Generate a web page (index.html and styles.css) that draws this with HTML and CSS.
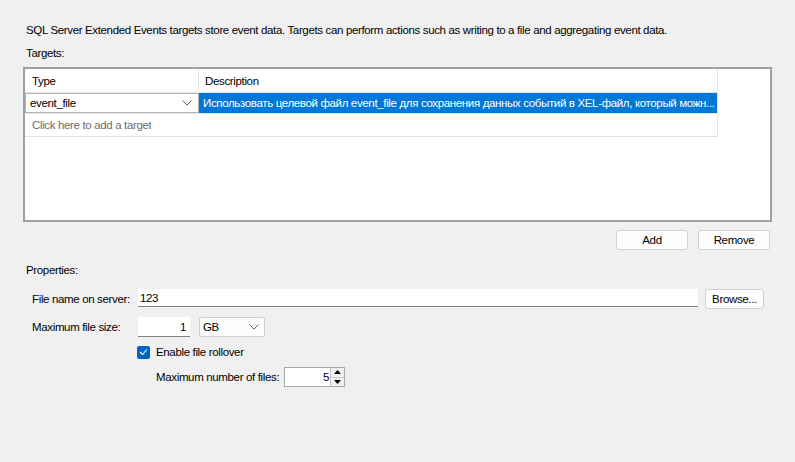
FILE: index.html
```html
<!DOCTYPE html>
<html>
<head>
<meta charset="utf-8">
<link rel="stylesheet" href="styles.css">
</head>
<body>
<div class="page">
  <div class="intro">SQL Server Extended Events targets store event data. Targets can perform actions such as writing to a file and aggregating event data.</div>
  <div class="section-label targets-label">Targets:</div>
  <div class="grid-box">
    <div class="grid">
      <div class="row head">
        <div class="cell c1">Type</div>
        <div class="cell c2">Description</div>
      </div>
      <div class="row data">
        <div class="cell c1 combo-cell">
          <span>event_file</span>
          <svg class="chev" width="10" height="6" viewBox="0 0 10 6"><path d="M0.5 0.5 L5 5 L9.5 0.5" fill="none" stroke="#606060" stroke-width="1"/></svg>
        </div>
        <div class="cell c2 selected">Использовать целевой файл event_file для сохранения данных событий в XEL-файл, который можн...</div>
      </div>
      <div class="row add">
        <div class="cell addcell">Click here to add a target</div>
      </div>
    </div>
  </div>
  <div class="actions">
    <button class="btn btn-add">Add</button>
    <button class="btn btn-remove">Remove</button>
  </div>
  <div class="section-label props-label">Properties:</div>
  <div class="props">
    <div class="prow r-file">
      <div class="plabel">File name on server:</div>
      <div class="textbox wide">123</div>
      <button class="btn btn-browse">Browse...</button>
    </div>
    <div class="prow r-size">
      <div class="plabel">Maximum file size:</div>
      <div class="textbox num">1</div>
      <div class="combo">
        <span>GB</span>
        <svg class="chev" width="10" height="6" viewBox="0 0 10 6"><path d="M0.5 0.5 L5 5 L9.5 0.5" fill="none" stroke="#606060" stroke-width="1"/></svg>
      </div>
    </div>
    <div class="prow r-check">
      <span class="checkbox"><svg width="9" height="8" viewBox="0 0 9 8"><path d="M1 4 L3.5 6.5 L8 1.5" fill="none" stroke="#ffffff" stroke-width="1.1"/></svg></span>
      <span class="checklabel">Enable file rollover</span>
    </div>
    <div class="prow r-files">
      <div class="plabel2">Maximum number of files:</div>
      <div class="spinner">
        <span class="spin-val">5</span>
        <span class="spin-btns">
          <span class="spin-up"><svg width="7" height="4" viewBox="0 0 7 4"><path d="M0 4 L3.5 0 L7 4 Z" fill="#000"/></svg></span>
          <span class="spin-down"><svg width="7" height="4" viewBox="0 0 7 4"><path d="M0 0 L3.5 4 L7 0 Z" fill="#000"/></svg></span>
        </span>
      </div>
    </div>
  </div>
</div>
</body>
</html>
```

FILE: styles.css
```css
* { box-sizing: border-box; }
html, body {
  margin: 0;
  padding: 0;
  background: #f0f0f0;
}
body {
  font-family: "Liberation Sans", Arial, sans-serif;
  font-size: 11.5px;
  letter-spacing: -0.35px;
  color: #000;
  width: 795px;
  height: 462px;
  overflow: hidden;
}
.page {
  padding-top: 22px;
}
.intro {
  padding-left: 26px;
  height: 16px;
  line-height: 16px;
  white-space: nowrap;
}
.section-label {
  padding-left: 26px;
  height: 16px;
  line-height: 16px;
}
.targets-label {
  margin-top: 7px;
}
.grid-box {
  margin-top: 6px;
  margin-left: 23px;
  width: 749px;
  height: 155px;
  background: #fff;
  border: 1px solid #a0a0a0;
  box-shadow: inset 1px 1px 0 #a0a0a0, inset -1px -1px 0 #a0a0a0;
  padding: 1px;
}
.grid {
  width: 693px;
  border-right: 1px solid #e3e3e3;
}
.row {
  display: flex;
  border-bottom: 1px solid #e3e3e3;
}
.row.head { height: 24px; }
.row.data { height: 21px; }
.row.add { height: 23px; }
.cell {
  white-space: nowrap;
  overflow: hidden;
  display: flex;
  align-items: center;
}
.c1 {
  width: 174px;
  flex: none;
  border-right: 1px solid #e3e3e3;
  padding-left: 7px;
}
.c2 {
  flex: 1;
  padding-left: 6px;
}
.combo-cell {
  border: 1px solid #b4b4b4;
  padding-left: 4px;
  padding-right: 6px;
  justify-content: space-between;
}
.selected {
  background: #0078d7;
  color: #fff;
  padding-left: 4px;
}
.addcell {
  padding-left: 7px;
  color: #6d6d6d;
}
.actions {
  display: flex;
  justify-content: flex-end;
  gap: 10px;
  width: 770px;
  margin-top: 8px;
}
.btn {
  font-family: inherit;
  font-size: 11.5px;
  letter-spacing: -0.35px;
  color: #000;
  background: #fdfdfd;
  border: 1px solid #d0d0d0;
  border-radius: 3px;
  padding: 0;
  height: 20px;
  line-height: 18px;
}
.btn-add, .btn-remove { width: 72px; }
.props-label {
  margin-top: 12px;
}
.props {
  margin-top: 11px;
}
.prow {
  display: flex;
  align-items: center;
  padding-left: 32px;
  white-space: nowrap;
}
.plabel {
  width: 106px;
  flex: none;
}
.r-file { height: 20px; }
.textbox {
  background: #fff;
  border-bottom: 1px solid #808080;
  height: 18px;
  line-height: 18px;
}
.textbox.wide {
  width: 560px;
  padding-left: 2px;
  align-self: flex-start;
}
.btn-browse {
  margin-left: 7px;
  width: 59px;
}
.r-size {
  margin-top: 8px;
  height: 20px;
}
.textbox.num {
  width: 52px;
  height: 20px;
  line-height: 20px;
  text-align: right;
  padding-right: 4px;
}
.combo {
  margin-left: 9px;
  width: 66px;
  height: 20px;
  background: #fdfdfd;
  border: 1px solid #cfcfcf;
  border-radius: 2px;
  display: flex;
  align-items: center;
  justify-content: space-between;
  padding-left: 3px;
  padding-right: 5px;
}
.r-check {
  margin-top: 8px;
  height: 14px;
  padding-left: 137px;
}
.checkbox {
  width: 13px;
  height: 13px;
  background: #0067c0;
  border-radius: 2px;
  display: flex;
  align-items: center;
  justify-content: center;
}
.checklabel {
  margin-left: 6px;
}
.r-files {
  margin-top: 8px;
  height: 20px;
  padding-left: 156px;
}
.plabel2 {
  width: 128px;
  flex: none;
}
.spinner {
  width: 61px;
  height: 20px;
  background: #fff;
  border: 1px solid #a8a8a8;
  display: flex;
  align-items: stretch;
}
.spin-val {
  flex: 1;
  text-align: right;
  line-height: 18px;
  padding-right: 1px;
}
.spin-btns {
  width: 14px;
  display: flex;
  flex-direction: column;
  border-left: 1px solid #c8c8c8;
  background: #f0f0f0;
}
.spin-up, .spin-down {
  flex: 1;
  display: flex;
  align-items: center;
  justify-content: center;
}
.spin-up { border-bottom: 1px solid #c8c8c8; }
```
